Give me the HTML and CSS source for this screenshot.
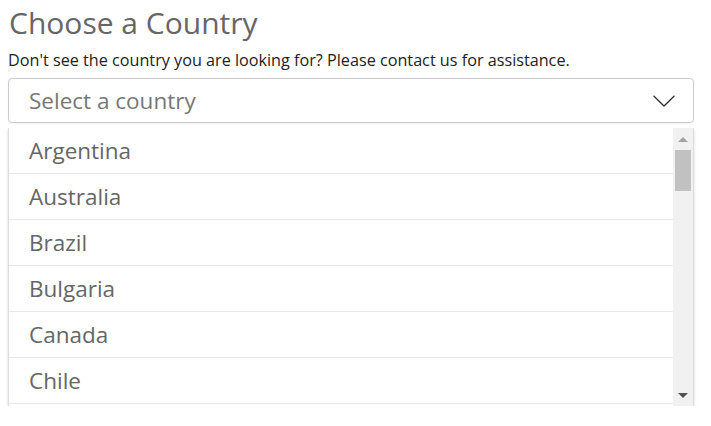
FILE: index.html
```html
<!DOCTYPE html>
<html>
<head>
<meta charset="utf-8">
<link rel="stylesheet" href="styles.css">
</head>
<body>
<div class="page">
  <h1 class="title">Choose a Country</h1>
  <p class="hint">Don't see the country you are looking for? Please contact us for assistance.</p>
  <div class="select">
    <span class="placeholder">Select a country</span>
    <svg class="chevron" width="22" height="12" viewBox="0 0 22 12"><path d="M0.5 0.8 L11 11 L21.5 0.8" fill="none" stroke="#333" stroke-width="1.3"/></svg>
  </div>
  <div class="dropdown">
    <ul class="options">
      <li class="option">Argentina</li>
      <li class="option">Australia</li>
      <li class="option">Brazil</li>
      <li class="option">Bulgaria</li>
      <li class="option">Canada</li>
      <li class="option">Chile</li>
    </ul>
    <div class="scrollbar">
      <div class="arrow up"></div>
      <div class="track"><div class="thumb"></div></div>
      <div class="arrow down"></div>
    </div>
  </div>
</div>
</body>
</html>
```
FILE: styles.css
```css
* { box-sizing: border-box; }
html, body { margin: 0; padding: 0; background: #fff; }
body { font-family: "Open Sans", "Liberation Sans", sans-serif; }
.page { padding: 3px 0 0 8px; width: 694px; }
.title { margin: 0; font-size: 30px; font-weight: 400; color: #666; line-height: 40px; padding-left: 1px; }
.hint { margin: 7px 0 0; font-size: 16.2px; color: #222; line-height: 20px; white-space: nowrap; }
.select {
  margin-top: 8px; height: 45px; border: 1px solid #ccc; border-radius: 4px;
  display: flex; align-items: center; justify-content: space-between;
  padding: 0 18px 0 20px; box-shadow: 0 1px 2px rgba(0,0,0,0.06);
}
.placeholder { font-size: 22.5px; color: #777; }
.chevron { display: block; margin-top: 1px; }
.dropdown {
  margin-top: 5px; height: 278px; width: 686px; display: flex;
  border-left: 1px solid #ddd; border-right: 1px solid #ddd;
  box-shadow: 0 2px 3px rgba(0,0,0,0.15);
  overflow: hidden;
}
.options { list-style: none; margin: 0; padding: 0; flex: 1; }
.option {
  height: 46px; border-bottom: 1px solid #e8e8e8; padding-left: 20px;
  font-size: 22.5px; color: #666; line-height: 46px;
}
.scrollbar { width: 20px; background: #f1f1f1; display: flex; flex-direction: column; }
.arrow { height: 22px; display: flex; align-items: center; justify-content: center; }
.arrow::before { content: ""; border-left: 5px solid transparent; border-right: 5px solid transparent; }
.arrow.up::before { border-bottom: 5px solid #a3a3a3; }
.arrow.down::before { border-top: 5px solid #505050; }
.arrow.down { margin-top: auto; }
.track { padding: 0 2px; }
.thumb { height: 41px; background: #c1c1c1; }
```
